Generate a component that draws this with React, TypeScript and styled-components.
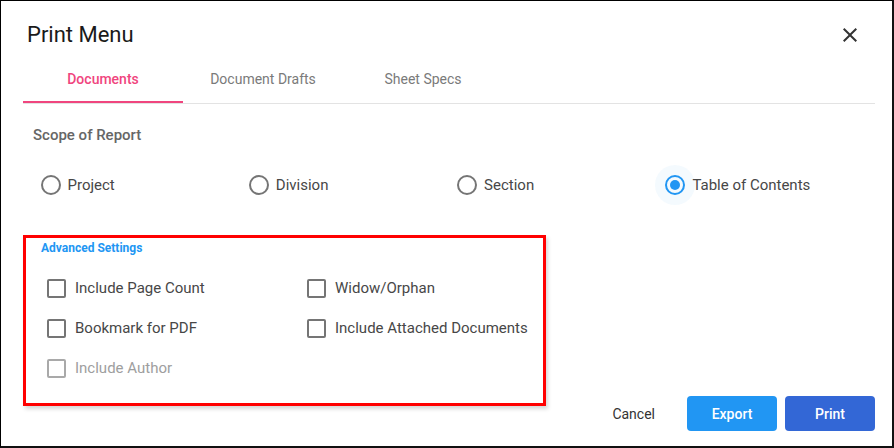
import React, { useState } from 'react';
import styled, { createGlobalStyle } from 'styled-components';

const GlobalStyle = createGlobalStyle`
  body {
    margin: 0;
    background: #ffffff;
    font-family: Roboto, "Liberation Sans", Arial, sans-serif;
  }
  * {
    box-sizing: border-box;
  }
`;

const Dialog = styled.div`
  width: 894px;
  background: #ffffff;
  border-top: 1px solid #000;
  border-left: 1px solid #000;
  border-right: 2px solid #111;
  border-bottom: 2px solid #111;
  display: flex;
  flex-direction: column;
`;

const Header = styled.div`
  display: flex;
  align-items: center;
  justify-content: space-between;
  height: 54px;
  padding: 13px 30px 0 26px;
`;

const Title = styled.h2`
  margin: 0;
  font-size: 22px;
  font-weight: 400;
  color: #1a1a1a;
`;

const CloseButton = styled.button`
  display: flex;
  padding: 0;
  border: none;
  background: none;
  cursor: pointer;
  color: #333;
`;

const TabBar = styled.div`
  display: flex;
  margin: 0 17px 0 22px;
  border-bottom: 1px solid #e3e3e3;
`;

const Tab = styled.button<{ $active?: boolean }>`
  width: 160px;
  height: 48px;
  border: none;
  background: none;
  font-family: inherit;
  font-size: 14px;
  font-weight: ${({ $active }) => ($active ? 500 : 400)};
  color: ${({ $active }) => ($active ? '#f0457e' : '#7a7a7a')};
  box-shadow: ${({ $active }) => ($active ? 'inset 0 -2px 0 #f0457e' : 'none')};
  cursor: pointer;
  padding: 0;
`;

const SectionLabel = styled.div`
  margin: 21px 0 0 32px;
  font-size: 15px;
  line-height: 20px;
  font-weight: 500;
  color: #666666;
`;

const RadioRow = styled.div`
  display: grid;
  grid-template-columns: repeat(4, 208.3px);
  margin: 20px 0 0 29.5px;
`;

const RadioItem = styled.label`
  display: flex;
  align-items: center;
  height: 40px;
  cursor: pointer;
`;

const RadioControl = styled.span<{ $checked?: boolean }>`
  display: flex;
  align-items: center;
  justify-content: center;
  width: 40px;
  height: 40px;
  border-radius: 50%;
  background: ${({ $checked }) => ($checked ? 'rgba(33, 150, 243, 0.05)' : 'transparent')};
`;

const RadioCircle = styled.span<{ $checked?: boolean }>`
  display: flex;
  align-items: center;
  justify-content: center;
  width: 20px;
  height: 20px;
  border-radius: 50%;
  border: 2px solid ${({ $checked }) => ($checked ? '#2196f3' : '#757575')};
  &::after {
    content: '';
    width: 10px;
    height: 10px;
    border-radius: 50%;
    background: #2196f3;
    display: ${({ $checked }) => ($checked ? 'block' : 'none')};
  }
`;

const OptionText = styled.span<{ $disabled?: boolean; $shift?: number }>`
  margin-left: ${({ $shift = 0 }) => $shift}px;
  font-size: 15px;
  color: ${({ $disabled }) => ($disabled ? '#9e9e9e' : '#474747')};
`;

const Footer = styled.div`
  display: flex;
  align-items: flex-end;
  justify-content: space-between;
  margin-top: 30px;
  padding: 0 17px 15px 22px;
`;

const AdvancedBox = styled.div`
  width: 523px;
  height: 171px;
  margin-bottom: 25px;
  border: 3px solid #ff0000;
  box-shadow: 2px 3px 4px rgba(0, 0, 0, 0.16);
  padding: 3px 0 0 15px;
`;

const AdvancedTitle = styled.div`
  font-size: 12px;
  line-height: 14px;
  font-weight: 700;
  color: #2196f3;
`;

const CheckGrid = styled.div`
  display: grid;
  grid-template-columns: repeat(2, 260px);
  margin: 13px 0 0 -4px;
`;

const CheckItem = styled.label<{ $disabled?: boolean }>`
  display: flex;
  align-items: center;
  height: 40px;
  cursor: ${({ $disabled }) => ($disabled ? 'default' : 'pointer')};
`;

const CheckControl = styled.span`
  display: flex;
  align-items: center;
  justify-content: center;
  width: 38px;
  height: 40px;
`;

const CheckSquare = styled.span<{ $disabled?: boolean }>`
  width: 19px;
  height: 19px;
  border-radius: 2px;
  border: 2px solid ${({ $disabled }) => ($disabled ? '#a9a9a9' : '#757575')};
`;

const Actions = styled.div`
  display: flex;
  align-items: center;
  gap: 8px;
`;

const TextButton = styled.button`
  height: 35px;
  padding: 0 16px;
  margin-right: 8px;
  border: none;
  background: none;
  font-family: inherit;
  font-size: 14px;
  font-weight: 400;
  color: #333333;
  cursor: pointer;
`;

const FilledButton = styled.button<{ $color: string }>`
  width: 90px;
  height: 35px;
  border: none;
  border-radius: 4px;
  background: ${({ $color }) => $color};
  font-family: inherit;
  font-size: 14px;
  font-weight: 500;
  color: #ffffff;
  cursor: pointer;
`;

const scopes = ['Project', 'Division', 'Section', 'Table of Contents'];

const settings = [
  { label: 'Include Page Count' },
  { label: 'Widow/Orphan' },
  { label: 'Bookmark for PDF' },
  { label: 'Include Attached Documents' },
  { label: 'Include Author', disabled: true },
];

export default function App() {
  const [tab, setTab] = useState(0);
  const [scope, setScope] = useState('Table of Contents');

  return (
    <>
      <GlobalStyle />
      <Dialog>
        <Header>
          <Title>Print Menu</Title>
          <CloseButton aria-label="close">
            <svg width="24" height="24" viewBox="0 0 24 24" fill="currentColor">
              <path d="M19 6.41L17.59 5 12 10.59 6.41 5 5 6.41 10.59 12 5 17.59 6.41 19 12 13.41 17.59 19 19 17.59 13.41 12z" />
            </svg>
          </CloseButton>
        </Header>
        <TabBar>
          {['Documents', 'Document Drafts', 'Sheet Specs'].map((t, i) => (
            <Tab key={t} $active={tab === i} onClick={() => setTab(i)}>
              {t}
            </Tab>
          ))}
        </TabBar>
        <SectionLabel>Scope of Report</SectionLabel>
        <RadioRow>
          {scopes.map((s) => (
            <RadioItem key={s} onClick={() => setScope(s)}>
              <RadioControl $checked={scope === s}>
                <RadioCircle $checked={scope === s} />
              </RadioControl>
              <OptionText $shift={-3}>{s}</OptionText>
            </RadioItem>
          ))}
        </RadioRow>
        <Footer>
          <AdvancedBox>
            <AdvancedTitle>Advanced Settings</AdvancedTitle>
            <CheckGrid>
              {settings.map((s) => (
                <CheckItem key={s.label} $disabled={s.disabled}>
                  <CheckControl>
                    <CheckSquare $disabled={s.disabled} />
                  </CheckControl>
                  <OptionText $disabled={s.disabled}>{s.label}</OptionText>
                </CheckItem>
              ))}
            </CheckGrid>
          </AdvancedBox>
          <Actions>
            <TextButton>Cancel</TextButton>
            <FilledButton $color="#2196f3">Export</FilledButton>
            <FilledButton $color="#3367d6">Print</FilledButton>
          </Actions>
        </Footer>
      </Dialog>
    </>
  );
}
